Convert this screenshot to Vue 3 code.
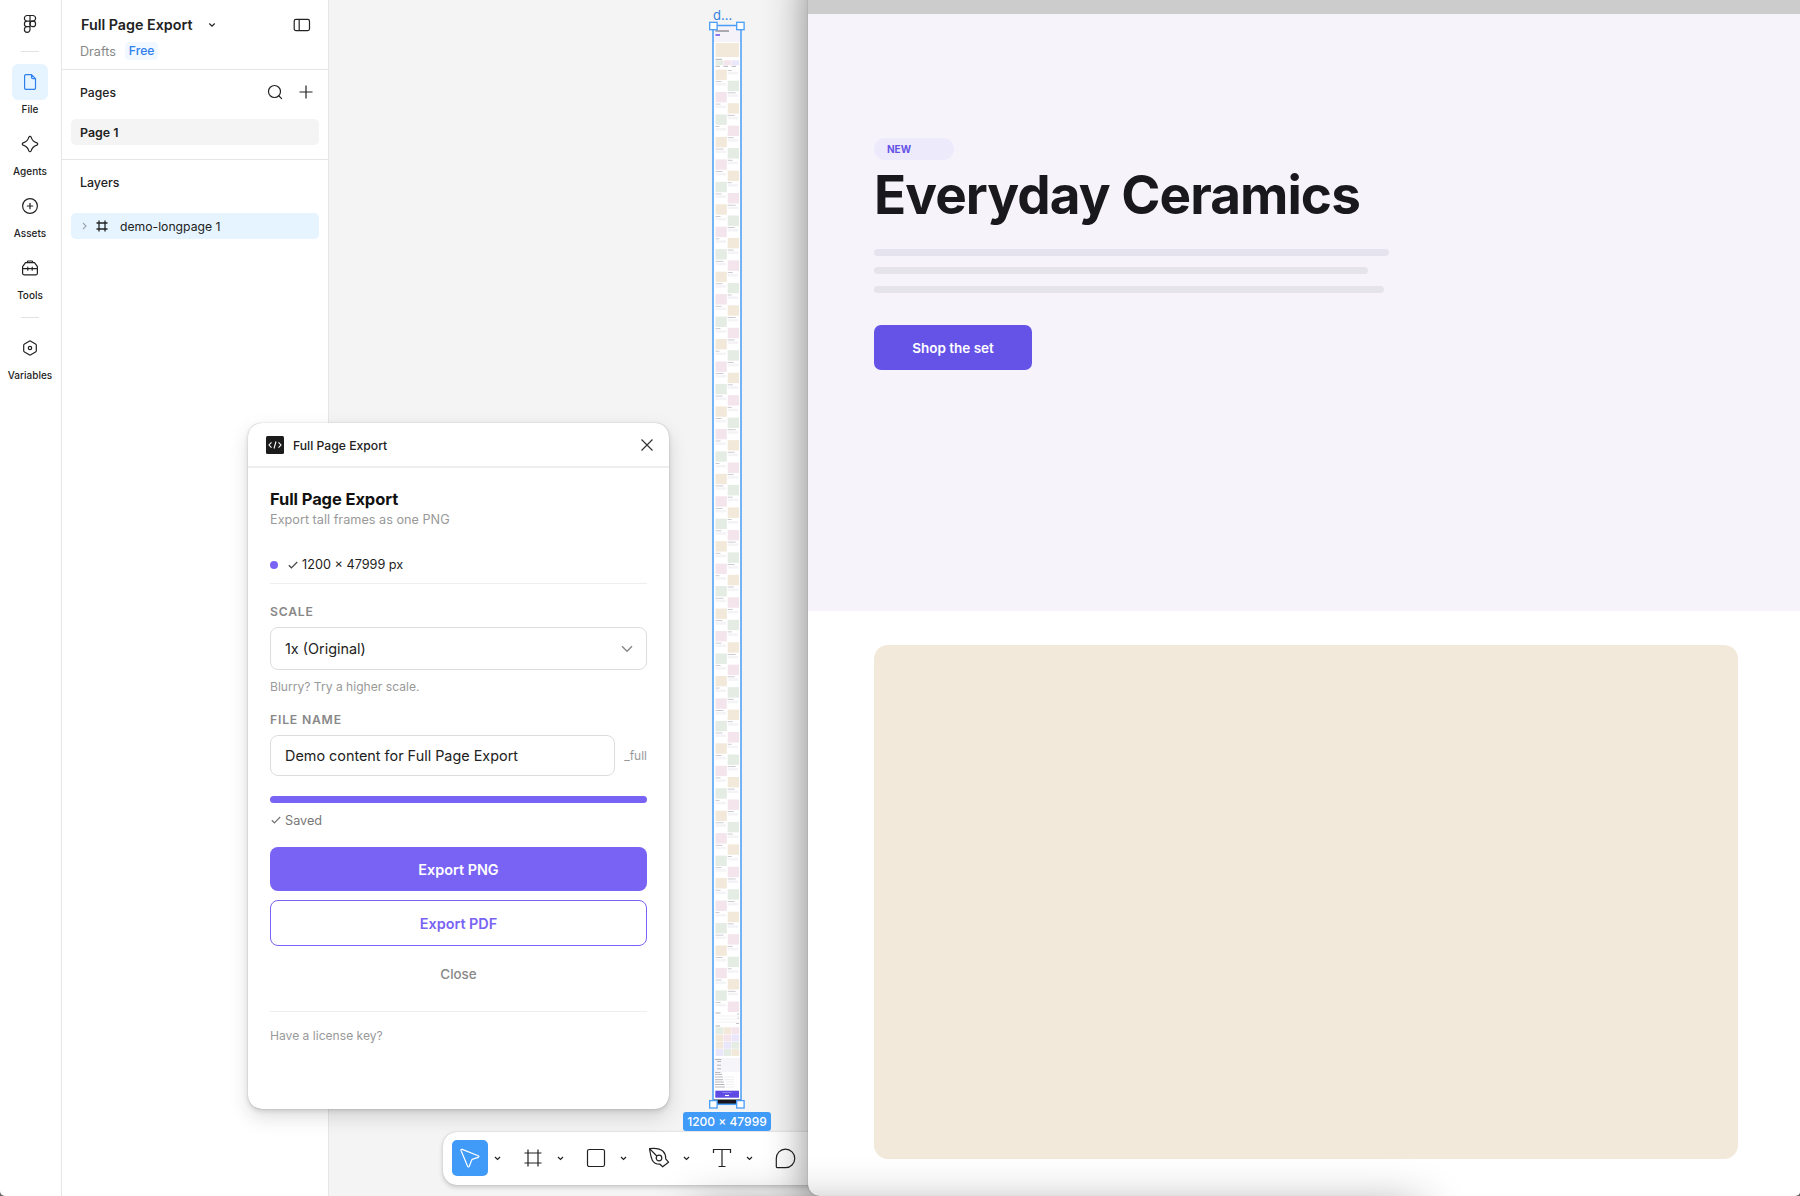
<script setup>
const nav = [
  { label: 'File', icon: 'file', active: true },
  { label: 'Agents', icon: 'agents' },
  { label: 'Assets', icon: 'assets' },
  { label: 'Tools', icon: 'tools' },
]
const tints = ['#f3e9da', '#e4ece4', '#f3e5eb', '#f3e9da', '#e4ece4', '#f3e5eb']
const tiles = Array.from({ length: 84 }, (_, i) => ({
  y: 69.5 + i * 11.23,
  right: i % 2 === 1,
  fill: tints[i % 6],
  w: 4 + ((i * 7) % 5),
}))
const g = '#e4ece4', b = '#f3e9da', p = '#f3e5eb', v = '#ebe7fb'
const grid = [g, b, p, b, p, v, b, v, g, v, g, b]
const gallery = grid.map((fill, i) => ({ fill, x: 715.5 + (i % 3) * 8, y: 1027.3 + Math.floor(i / 3) * 7.25 }))
</script>

<template>
  <div class="app">
    <nav class="rail">
      <svg class="logo" width="14" height="20" viewBox="0 0 14 20" fill="none" stroke="#222" stroke-width="1.2">
        <path d="M7 1.5H4.2a2.8 2.8 0 0 0 0 5.6H7zM7 1.5h2.8a2.8 2.8 0 0 1 0 5.6H7zM7 7.1H4.2a2.8 2.8 0 0 0 0 5.6H7zM7 12.7H4.2A2.8 2.8 0 1 0 7 15.5z" />
        <circle cx="9.8" cy="9.9" r="2.8" />
      </svg>
      <span class="sep"></span>
      <div v-for="n in nav" :key="n.label" class="item">
        <span class="tile" :class="{ active: n.active }">
          <svg width="20" height="20" viewBox="0 0 20 20" fill="none" stroke="currentColor" stroke-width="1.2" stroke-linejoin="round" stroke-linecap="round">
            <path v-if="n.icon === 'file'" d="M5.9 2.6h5.6l4 4v9.3a1.5 1.5 0 0 1-1.5 1.5H6.1a1.5 1.5 0 0 1-1.5-1.5V4a1.4 1.4 0 0 1 1.3-1.4zM11.5 2.6v2.6a1.4 1.4 0 0 0 1.4 1.4h2.6" />
            <path v-if="n.icon === 'agents'" d="M8.9 3.1C9.300 2 10.700 2 11.100 3.100C12 6 14 8 16.900 8.900C18 9.300 18 10.700 16.900 11.100C14 12 12 14 11.100 16.900C10.700 18 9.300 18 8.900 16.900C8 14 6 12 3.100 11.100C2 10.700 2 9.300 3.100 8.900C6 8 8 6 8.900 3.100Z" />
            <template v-if="n.icon === 'assets'"><circle cx="10" cy="10" r="7.4" /><path d="M10 7.300v5.400M7.300 10h5.400" /></template>
            <path v-if="n.icon === 'tools'" d="M7 4.700l.8-1.700h4.400l.8 1.700M5.500 4.700h9l2.900 4v6.600a1.500 1.500 0 0 1-1.500 1.500H4.100a1.500 1.500 0 0 1-1.500-1.500V8.700zM2.600 10.700h14.800M7.800 9.200v3M12.200 9.200v3" />
          </svg>
        </span>
        <span class="cap">{{ n.label }}</span>
      </div>
      <span class="sep low"></span>
      <div class="item">
        <span class="tile">
          <svg width="20" height="20" viewBox="0 0 20 20" fill="none" stroke="currentColor" stroke-width="1.2" stroke-linejoin="round">
            <path d="M9.200 3.200a1.600 1.600 0 0 1 1.600 0l4.700 2.700a1.600 1.600 0 0 1 .8 1.400v5.400a1.600 1.600 0 0 1-.8 1.400l-4.700 2.700a1.600 1.600 0 0 1-1.600 0l-4.700-2.700a1.600 1.600 0 0 1-.8-1.400V7.300a1.600 1.600 0 0 1 .8-1.400z" /><circle cx="10" cy="10" r="1.7" />
          </svg>
        </span>
        <span class="cap">Variables</span>
      </div>
    </nav>

    <aside class="side">
      <header class="head">
        <div class="title-row">
          <b>Full Page Export</b>
          <svg class="chev" width="8" height="6" viewBox="0 0 8 6" fill="none" stroke="#222" stroke-width="1.2"><path d="M1.300 1.500L4 4.200l2.700-2.700" /></svg>
          <svg width="18" height="14" viewBox="0 0 18 14" fill="none" stroke="#222" stroke-width="1.2"><rect x="1.2" y="1.4" width="15.3" height="11.2" rx="1.8" /><path d="M6.200 1.400v11.200" /></svg>
        </div>
        <div class="sub"><span>Drafts</span><span class="free">Free</span></div>
      </header>
      <section class="pages">
        <div class="sec-row">
          <span>Pages</span>
          <svg class="search" width="16" height="16" viewBox="0 0 16 16" fill="none" stroke="#222" stroke-width="1.2" stroke-linecap="round"><circle cx="7.5" cy="7.5" r="6" /><path d="M12 12l2.600 2.600" /></svg>
          <svg width="14" height="14" viewBox="0 0 14 14" fill="none" stroke="#222" stroke-width="1.2"><path d="M7 .5v13M.5 7h13" /></svg>
        </div>
        <div class="page">Page 1</div>
      </section>
      <section class="layers">
        <div class="lt">Layers</div>
        <div class="layer">
          <svg width="5" height="8" viewBox="0 0 5 8" fill="none" stroke="#9aa5ae" stroke-width="1.1"><path d="M1 1l3 3-3 3" /></svg>
          <svg class="hash" width="12" height="12" viewBox="0 0 12 12" fill="none" stroke="#222" stroke-width="1.3"><path d="M3 .5v11M9 .5v11M.5 3h11M.5 9h11" /></svg>
          <span>demo-longpage 1</span>
        </div>
      </section>
    </aside>

    <main class="canvas">
      <div class="frame-name">d...</div>
      <svg class="frame" width="40" height="1100" viewBox="706 10 40 1100">
        <rect x="713" y="25.5" width="28" height="1079" fill="#fff" />
        <rect x="713" y="25.5" width="28" height="16.5" fill="#f5f2fa" />
        <path d="M715.500 31H729" stroke="#8d8994" stroke-width="1.4" />
        <path d="M715.500 35H720" stroke="#8b78ee" stroke-width="2" />
        <rect x="715.5" y="43" width="23.5" height="14" fill="#f3e9da" />
        <path d="M715.500 59.300h6.500M715.500 66.300h4.500M723.500 66.300h4.500M731.500 66.300h4.500" stroke="#aaa" stroke-width=".9" />
        <rect x="715.5" y="60.3" width="7.6" height="5" fill="#e4ece4" /><rect x="723.5" y="60.3" width="7.6" height="5" fill="#f3e5eb" /><rect x="731.5" y="60.3" width="7.6" height="5" fill="#ebe7fb" />
        <g v-for="(t, i) in tiles" :key="i">
          <rect :x="t.right ? 727.7 : 715.5" :y="t.y" width="11.3" height="10.4" :fill="t.fill" />
          <rect :x="t.right ? 715.5 : 727.7" :y="t.y + .5" :width="t.w" height=".8" fill="#bfbdc5" />
          <rect :x="t.right ? 715.5 : 727.7" :y="t.y + 2.3" width="10.5" height="2.6" fill="#f4f4f7" />
        </g>
        <path d="M715.500 1013h5M715.500 1026h4.500" stroke="#aaa" stroke-width=".9" />
        <path d="M715.500 1016h23.500M715.500 1019h23.500M715.500 1022h23.500" stroke="#eee" stroke-width=".7" />
        <path d="M737 1014h2M737.500 1018h1.500M736 1023.500h3" stroke="#aaa" stroke-width=".7" />
        <rect v-for="(c, i) in gallery" :key="'g' + i" :x="c.x" :y="c.y" width="7.7" height="6.9" :fill="c.fill" />
        <rect x="713" y="1058" width="28" height="14" fill="#f6f5fa" />
        <path d="M715 1059.500h6.500M717 1061.500h4M717 1065.200h4M717 1068.800h4M715 1072.500h5.500M715 1074.400h7M715 1077h8M715 1079.700h8M715 1082h9M715 1084.500h9.500M715 1087h10" stroke="#a5a3aa" stroke-width=".8" />
        <path d="M724 1077h10M724 1079.700h10M726 1082h8M726 1084.500h8M726 1087h8" stroke="#e8e8ec" stroke-width=".7" />
        <rect x="715.3" y="1090.7" width="23.7" height="7" fill="#5f4be4" /><path d="M725 1095.500h4" stroke="#fff" stroke-width="1.2" />
        <path d="M722.500 1092.500h9" stroke="#9a8df0" stroke-width=".8" />
        <rect x="713" y="1099.5" width="28" height="4.5" fill="#17161c" />
        <rect x="713" y="25.5" width="28" height="1078.8" fill="none" stroke="#489df5" stroke-width="1.5" />
        <g fill="#fff" stroke="#489df5" stroke-width="1.3">
          <rect x="709.7" y="22.3" width="7.4" height="7.4" /><rect x="736.7" y="22.3" width="7.4" height="7.4" />
          <rect x="709.7" y="1100.6" width="7.4" height="7.4" /><rect x="736.7" y="1100.6" width="7.4" height="7.4" />
        </g>
      </svg>
      <div class="size">1200 × 47999</div>
      <div class="toolbar">
        <span class="tool on"><svg width="22" height="22" viewBox="0 0 22 22" fill="none" stroke="#fff" stroke-width="1.3" stroke-linejoin="round"><path d="M3.200 2.400l16 6.300c.9.400.9 1.400 0 1.700l-5.400 1.700c-.6.200-1 .6-1.200 1.200l-2.300 5.900c-.4.900-1.400.9-1.700 0L2 3.500c-.3-.8.400-1.400 1.200-1.100z" /></svg></span>
        <svg class="dd" width="7" height="5" viewBox="0 0 7 5"><path d="M1 1l2.500 2.500L6 1" /></svg>
        <span class="tool"><svg width="20" height="20" viewBox="0 0 20 20"><path d="M5 1.500v17M15 1.500v17M1.500 5h17M1.500 15h17" /></svg></span>
        <svg class="dd" width="7" height="5" viewBox="0 0 7 5"><path d="M1 1l2.500 2.500L6 1" /></svg>
        <span class="tool"><svg width="20" height="20" viewBox="0 0 20 20"><rect x="1.5" y="1.5" width="17" height="17" rx="1.8" /></svg></span>
        <svg class="dd" width="7" height="5" viewBox="0 0 7 5"><path d="M1 1l2.500 2.500L6 1" /></svg>
        <span class="tool"><svg width="22" height="22" viewBox="0 0 22 22" stroke-linejoin="round"><path d="M1.500 1.700c5.500-.7 10-.5 13.500 2.500 2 1.900 2.800 4.700 2.700 7.700l2.800 3.300-5.800 4.600-2.700-2.600c-3.300.1-6.200-1-7.800-4.300C2.600 9.700 2.300 6 1.500 1.700zl7.300 7.300" /><circle cx="11" cy="11" r="2.8" /></svg></span>
        <svg class="dd" width="7" height="5" viewBox="0 0 7 5"><path d="M1 1l2.500 2.500L6 1" /></svg>
        <span class="tool"><svg width="20" height="20" viewBox="0 0 20 20"><path d="M1.500 5V1.500h17V5M10 1.500v17M6.500 18.500h7" /></svg></span>
        <svg class="dd" width="7" height="5" viewBox="0 0 7 5"><path d="M1 1l2.500 2.500L6 1" /></svg>
        <span class="tool"><svg width="21" height="21" viewBox="0 0 21 21"><path d="M10.500 1.200a9.200 9.200 0 0 1 0 18.500H2.600a1.300 1.300 0 0 1-1.300-1.300v-7.900a9.200 9.200 0 0 1 9.200-9.300z" /></svg></span>
      </div>
    </main>

    <section class="dialog">
      <header class="dhead">
        <svg width="18" height="18" viewBox="0 0 18 18" fill="none" stroke="#fff" stroke-width="1.1"><rect width="18" height="18" rx="1.5" fill="#1b1b1b" stroke="none" /><path d="M5.500 6.300L3 9l2.500 2.700M12.500 6.300L15 9l-2.500 2.700M10 5.500l-2 7" /></svg>
        <b>Full Page Export</b>
        <svg width="12" height="12" viewBox="0 0 12 12" stroke="#333" stroke-width="1.2"><path d="M.5.5l11 11M11.500.5l-11 11" /></svg>
      </header>
      <div class="body">
        <h2>Full Page Export</h2>
        <p class="lead">Export tall frames as one PNG</p>
        <div class="status"><i></i><svg class="ck" width="10" height="8" viewBox="0 0 10 8"><path d="M.8 4.300l2.600 2.500L9.200 1" /></svg><span>1200 × 47999 px</span></div>
        <label>SCALE</label>
        <div class="select"><span>1x (Original)</span><svg width="12" height="8" viewBox="0 0 12 8" fill="none" stroke="#888" stroke-width="1.5"><path d="M1 1.200l5 5 5-5" /></svg></div>
        <p class="hint">Blurry? Try a higher scale.</p>
        <label class="l2">FILE NAME</label>
        <div class="file"><div class="input">Demo content for Full Page Export</div><span>_full</span></div>
        <div class="bar"></div>
        <div class="saved"><svg class="ck" width="10" height="8" viewBox="0 0 10 8"><path d="M.8 4.300l2.600 2.500L9.200 1" /></svg><span>Saved</span></div>
        <div class="btn solid">Export PNG</div>
        <div class="btn line">Export PDF</div>
        <div class="close">Close</div>
        <div class="license">Have a license key?</div>
      </div>
    </section>

    <section class="preview">
      <div class="strip"></div>
      <div class="hero">
        <span class="new">NEW</span>
        <h1>Everyday Ceramics</h1>
        <i class="ln a"></i><i class="ln b"></i><i class="ln c"></i>
        <div class="shop">Shop the set</div>
      </div>
      <div class="below"><div class="photo"></div></div>
    </section>
    <div class="lower-shadow"></div>
  </div>
</template>

<style>
body { margin: 0; background: #666; }
</style>
<style scoped>
* { box-sizing: border-box; }
.app { position: relative; width: 1800px; height: 1196px; display: flex; overflow: hidden; background: #fff; border-radius: 0 0 5px 5px; font-family: Inter, "Liberation Sans", sans-serif; color: #222; font-size: 12.7px; }
svg { display: block; flex: none; }
h1, h2, p { margin: 0; }
.rail { width: 62px; border-right: 1px solid #e6e6e6; display: flex; flex-direction: column; align-items: center; padding: 14px 1px 0 0; }
.sep { width: 18px; height: 1px; background: #e3e3e3; margin: 17px 0 12px; }
.sep.low { margin: 5px 0 12px; }
.item { height: 62px; display: flex; flex-direction: column; align-items: center; }
.tile { width: 36px; height: 36px; border-radius: 6px; display: grid; place-items: center; }
.tile.active { background: #e5f4ff; color: #2f80ed; }
.cap { font-size: 10px; line-height: 14px; margin-top: 2px; letter-spacing: 0; font-weight: 450; }
.side { width: 267px; border-right: 1px solid #e6e6e6; }
.head { height: 70px; border-bottom: 1px solid #e6e6e6; padding: 14px 17px 0 19px; }
.title-row { display: flex; align-items: center; height: 21px; }
.title-row b { font-size: 14.3px; font-weight: 600; }
.chev { margin: 0 auto 0 16px; }
.sub { display: flex; align-items: center; margin: 7px 0 0 -1px; height: 18px; gap: 9px; color: #888; font-size: 12.6px; }
.free { background: #f1f8ff; color: #2f80ed; border-radius: 4px; padding: 0 4px; line-height: 18px; font-weight: 500; font-size: 12.2px; }
.pages { height: 90px; border-bottom: 1px solid #e6e6e6; padding: 13px 9px 0; }
.sec-row { display: flex; align-items: center; height: 18px; padding: 0 6px 0 9px; font-weight: 550; font-size: 12.2px; }
.search { margin: 0 16px 0 auto; }
.page { height: 26px; margin-top: 18px; border-radius: 5px; background: #f4f4f4; padding-left: 9px; line-height: 27px; font-weight: 600; font-size: 12.4px; }
.layers { padding: 13px 9px 0; }
.lt { padding-left: 9px; line-height: 19px; font-weight: 550; font-size: 12.4px; }
.layer { margin-top: 21px; height: 26px; border-radius: 5px; background: #e5f4ff; display: flex; align-items: center; padding-left: 11px; font-size: 12.2px; }
.hash { margin: 0 12px 0 9px; }
.canvas { position: relative; flex: 1; background: #f4f4f4; }
.frame-name { position: absolute; left: 384px; top: 7px; font-size: 13px; line-height: 17px; color: #3583e0; }
.frame { position: absolute; left: 377px; top: 10px; }
.size { position: absolute; z-index: 2; left: 354px; top: 1112px; width: 88px; height: 19px; border-radius: 3px; background: #409af8; color: #fff; font-size: 12px; font-weight: 500; line-height: 20px; text-align: center; white-space: nowrap; }
.toolbar { position: absolute; left: 114px; top: 1132px; width: 420px; height: 53px; border-radius: 14px; background: #fff; box-shadow: 0 2px 5px #0003, 0 0 1px #0004; display: flex; align-items: center; padding: 0 0 1px 9px; }
.tool { width: 36px; height: 36px; border-radius: 5px; display: grid; place-items: center; }
.tool svg { fill: none; stroke: #222; stroke-width: 1.2; }
.tool.on { background: #409af8; }
.tool.on svg { stroke: #fff; }
.dd { margin: 0 14px 0 6px; fill: none; stroke: #222; stroke-width: 1.2; }
.dialog { position: absolute; left: 248px; top: 423px; width: 421px; height: 686px; background: #fff; border-radius: 14px; box-shadow: 0 0 1px #0005, 0 2px 5px #0002, 0 8px 20px #0002; }
.dhead { height: 45px; border-bottom: 2px solid #eee; display: flex; align-items: center; padding: 1px 16px 0 18px; }
.dhead b { font-size: 12.2px; font-weight: 550; margin: 0 auto 0 9px; }
.body { padding: 19px 22px; display: flex; flex-direction: column; }
h2 { font-size: 16.5px; line-height: 24px; font-weight: 700; color: #111; letter-spacing: -.1px; }
.lead { font-size: 12.7px; line-height: 18px; color: #999; }
.status { display: flex; align-items: center; height: 55px; font-size: 12.7px; border-bottom: 1px solid #eee; padding: 27px 0 10px; margin-bottom: 19px; }
.status i { width: 8px; height: 8px; border-radius: 50%; background: #7863f4; margin-right: 10px; }
.ck { fill: none; stroke: #444; stroke-width: 1.2; margin-right: 4px; }
label { font-size: 12.2px; line-height: 18px; font-weight: 600; letter-spacing: .8px; color: #888; }
.select { margin-top: 6px; height: 43px; border: 1px solid #ddd; border-radius: 8px; display: flex; align-items: center; justify-content: space-between; padding: 0 13px 0 14px; font-size: 14.4px; }
.hint { margin-top: 8px; color: #999; font-size: 12.1px; line-height: 17px; }
.l2 { margin-top: 16px; }
.file { display: flex; align-items: center; justify-content: space-between; margin-top: 6px; color: #999; font-size: 12px; }
.input { width: 345px; height: 41px; border: 1px solid #ddd; border-radius: 8px; padding-left: 14px; line-height: 40px; font-size: 14.4px; color: #222; }
.bar { height: 7px; border-radius: 4px; background: #7863f4; margin-top: 20px; }
.saved { display: flex; align-items: center; margin-top: 8px; height: 18px; color: #777; }
.saved .ck { stroke: #777; margin-left: 1px; }
.btn { border-radius: 8px; display: grid; place-items: center; font-weight: 600; font-size: 14.4px; }
.solid { height: 44px; margin-top: 18px; background: #7863f4; color: #fff; }
.line { height: 46px; margin-top: 9px; border: 1px solid #7863f4; color: #7863f4; }
.close { margin-top: 18px; line-height: 20px; text-align: center; font-weight: 500; font-size: 13.4px; color: #888; }
.license { margin-top: 27px; border-top: 1px solid #eee; padding-top: 15px; line-height: 17px; color: #999; font-size: 12.1px; }
.preview { position: absolute; left: 808px; top: -40px; width: 1010px; height: 1236px; border-bottom-left-radius: 12px; background: #fff; overflow: hidden; box-shadow: 0 0 1px #0008, 0 12px 42px #0007; }
.lower-shadow { position: absolute; left: 700px; top: 1212px; width: 720px; height: 60px; box-shadow: 0 0 50px #0007; }
.strip { height: 54px; background: #ccc; }
.hero { height: 597px; background: #f6f3fb; padding: 124px 0 0 66px; }
.new { display: block; width: 80px; height: 22px; border-radius: 11px; background: #edeafc; color: #6553e7; font-weight: 700; font-size: 10px; line-height: 22px; padding-left: 13px; }
h1 { font-size: 53px; line-height: 64px; font-weight: 700; color: #19181d; margin-top: 3px; white-space: nowrap; letter-spacing: -.93px; }
.ln { display: block; height: 7px; border-radius: 4px; background: #e5e4eb; margin-top: 11.300px; }
.a { width: 515px; margin-top: 22px; background: #e5e4ee; }
.b { width: 494px; }
.c { width: 510px; }
.shop { margin-top: 32.400px; width: 158px; height: 45px; border-radius: 7px; background: #6553e7; color: #fff; font-weight: 600; font-size: 13.5px; line-height: 46px; text-align: center; }
.below { padding: 33.500px 0 0 66px; }
.photo { width: 864px; height: 514px; border-radius: 14px; background: #f3e9db; }
</style>
